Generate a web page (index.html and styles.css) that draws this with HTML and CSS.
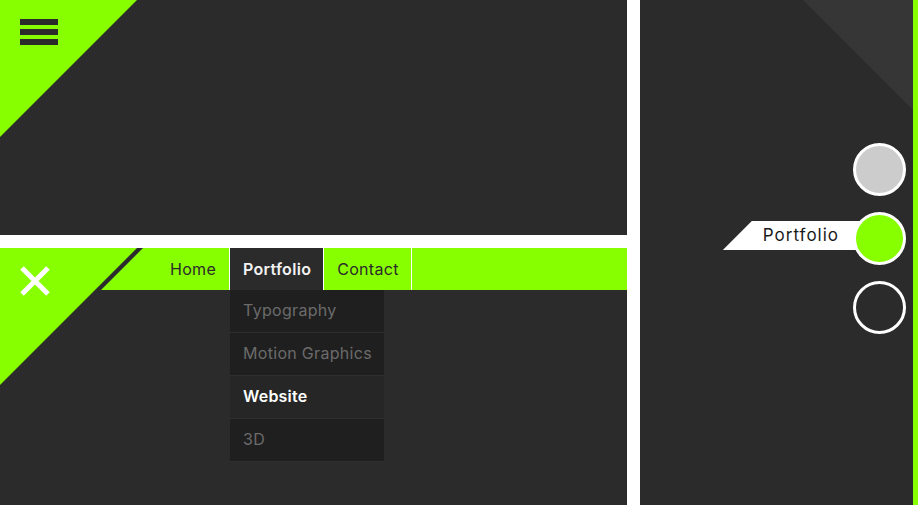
FILE: index.html
```html
<!DOCTYPE html>
<html lang="en">
<head>
<meta charset="utf-8">
<title>Menus</title>
<link rel="stylesheet" href="styles.css">
</head>
<body>
<div class="page">
  <div class="left">
    <section class="panel panel-top">
      <div class="corner corner-top"></div>
      <button class="burger" aria-label="Menu"><span></span><span></span><span></span></button>
    </section>
    <section class="panel panel-bottom">
      <div class="corner corner-bottom"></div>
      <button class="close" aria-label="Close">
        <svg width="32" height="32" viewBox="0 0 32 32"><path d="M3 3 L29 29 M29 3 L3 29" stroke="#fff" stroke-width="5" fill="none"/></svg>
      </button>
      <nav class="nav">
        <ul class="nav-list">
          <li class="nav-item nav-home">Home</li>
          <li class="nav-item active">Portfolio
            <ul class="dropdown">
              <li class="drop-item">Typography</li>
              <li class="drop-item">Motion Graphics</li>
              <li class="drop-item current">Website</li>
              <li class="drop-item">3D</li>
            </ul>
          </li>
          <li class="nav-item">Contact</li>
        </ul>
      </nav>
    </section>
  </div>
  <section class="panel panel-right">
    <div class="shade"></div>
    <div class="dots">
      <div class="dot dot-grey"></div>
      <div class="dot dot-green"><span class="dot-label">Portfolio</span></div>
      <div class="dot dot-empty"></div>
    </div>
  </section>
</div>
</body>
</html>
```

FILE: styles.css
```css
* { box-sizing: border-box; }
html, body { margin: 0; padding: 0; }
body {
  background: #fff;
  font-family: "Inter", "Liberation Sans", sans-serif;
  width: 918px;
  height: 505px;
  overflow: hidden;
}
.page {
  display: grid;
  grid-template-columns: 627px 278px;
  column-gap: 13px;
  height: 505px;
}
.left {
  display: grid;
  grid-template-rows: 235px 257px;
  row-gap: 13px;
}
.panel {
  background: #2b2b2b;
  position: relative;
  z-index: 0;
}
.corner {
  position: absolute;
  left: 0;
  top: 0;
  width: 137px;
  height: 137px;
  background: #88ff00;
  clip-path: polygon(0 0, 100% 0, 0 100%);
}
.burger {
  position: relative;
  display: flex;
  flex-direction: column;
  gap: 4px;
  margin: 19px 0 0 20px;
  padding: 0;
  border: 0;
  background: none;
  width: 38px;
}
.burger span {
  display: block;
  height: 6px;
  background: #2b2b2b;
}
.close {
  position: absolute;
  left: 19px;
  top: 17px;
  padding: 0;
  border: 0;
  background: none;
  z-index: 2;
  width: 32px;
  height: 32px;
}
.close svg { display: block; }
.nav {
  position: relative;
  height: 42px;
}
.nav::before {
  content: "";
  position: absolute;
  inset: 0;
  background: #88ff00;
  clip-path: polygon(143px 0, 100% 0, 100% 100%, 101px 100%);
}
.nav-list {
  position: relative;
  list-style: none;
  margin: 0;
  padding: 0 0 0 157px;
  display: flex;
  height: 42px;
}
.nav-item {
  position: relative;
  height: 42px;
  line-height: 42px;
  padding: 0 12px 0 13px;
  font-size: 16px;
  color: #2b2b2b;
  letter-spacing: 0.3px;
  border-right: 1px solid #fff;
}
.nav-item.nav-home { padding-right: 13px; }
.nav-item.active {
  background: #2b2b2b;
  color: #f2f2f2;
  font-weight: 600;
  letter-spacing: 0.3px;
  padding-right: 12px;
}
.dropdown {
  position: absolute;
  left: 0;
  top: 42px;
  width: 154px;
  list-style: none;
  margin: 0;
  padding: 0;
  z-index: 5;
}
.drop-item {
  height: 43px;
  line-height: 41px;
  padding-left: 13px;
  background: #1f1f1f;
  color: #6b6b6b;
  font-size: 16px;
  font-weight: 400;
  letter-spacing: 0.3px;
  border-bottom: 1px solid #2e2e2e;
}
.drop-item.current {
  background: #262626;
  color: #fff;
  font-weight: 600;
  letter-spacing: 0.2px;
}
.panel-right {
  border-right: 5px solid #88ff00;
  overflow: hidden;
}
.shade {
  position: absolute;
  right: 0;
  top: 0;
  width: 110px;
  height: 110px;
  background: #363636;
  clip-path: polygon(0 0, 100% 0, 100% 100%);
}
.dots {
  position: relative;
  display: flex;
  flex-direction: column;
  align-items: flex-end;
  gap: 16px;
  padding: 143px 7px 0 0;
}
.dot {
  position: relative;
  width: 53px;
  height: 53px;
  border-radius: 50%;
  border: 3px solid #fff;
}
.dot-grey { background: #cccccc; }
.dot-green { background: #88ff00; }
.dot-empty { background: transparent; }
.dot-label {
  position: absolute;
  right: 40px;
  top: 6px;
  height: 29px;
  line-height: 29px;
  padding: 0 24px 0 40px;
  background: #fff;
  color: #1a1a1a;
  font-size: 17px;
  letter-spacing: 1px;
  white-space: nowrap;
  clip-path: polygon(29px 0, 100% 0, 100% 100%, 0 100%);
  z-index: -1;
}
```
